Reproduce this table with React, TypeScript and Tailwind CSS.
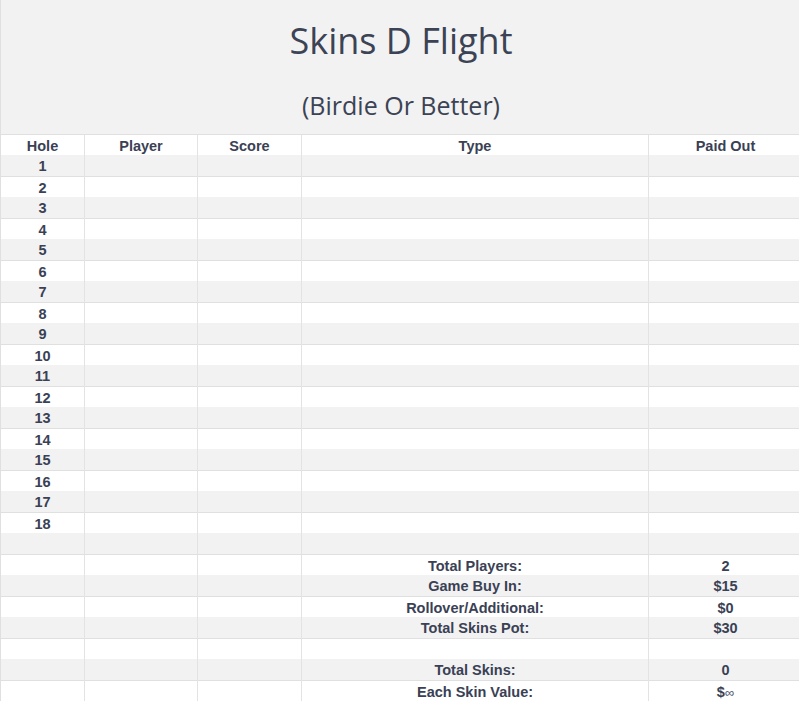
import React from 'react';

type Row = { hole?: string; label?: string; value?: React.ReactNode };

const holes: Row[] = Array.from({ length: 18 }, (_, i) => ({ hole: String(i + 1) }));

const summary: Row[] = [
  {},
  { label: 'Total Players:', value: '2' },
  { label: 'Game Buy In:', value: '$15' },
  { label: 'Rollover/Additional:', value: '$0' },
  { label: 'Total Skins Pot:', value: '$30' },
  {},
  { label: 'Total Skins:', value: '0' },
  {
    label: 'Each Skin Value:',
    value: (
      <>
        $<span className="font-normal text-[13px] text-[#4a5266]">∞</span>
      </>
    ),
  },
];

const cols = 'grid grid-cols-[84px_113px_104px_347px_153px]';
const cell = 'flex items-center justify-center pt-px border-r border-[#e3e3e3]';
const lastCell = 'flex items-center justify-center pt-px';

const TableRow: React.FC<{ row: Row; shaded: boolean }> = ({ row, shaded }) => (
  <div
    className={
      shaded
        ? `${cols} h-[22px] bg-[#f2f2f2] border-b border-[#e0e0e0]`
        : `${cols} h-[20px] bg-white`
    }
  >
    <div className={cell}>{row.hole}</div>
    <div className={cell}></div>
    <div className={cell}></div>
    <div className={cell}>{row.label}</div>
    <div className={lastCell}>{row.value}</div>
  </div>
);

const App: React.FC = () => {
  const rows = [...holes, ...summary];

  return (
    <div className="w-[799px] h-[701px] overflow-hidden bg-white">
      <div className="w-[801px] border-l border-[#e0e0e0]">
        {/* Title block */}
        <div className="h-[135px] bg-[#f2f2f2] border-b border-[#e0e0e0] text-center text-[#3b4354] font-['Open_Sans',sans-serif]">
          <div className="pt-[23px] text-[36px] leading-[36px]">Skins D Flight</div>
          <div className="mt-[34px] text-[25px] leading-[25px]">(Birdie Or Better)</div>
        </div>

        {/* Table */}
        <div className="font-['Liberation_Sans',Arial,sans-serif] font-bold text-[14.5px] text-[#3a4154]">
          <div className={`${cols} h-[20px] bg-white`}>
            <div className={cell}>Hole</div>
            <div className={cell}>Player</div>
            <div className={cell}>Score</div>
            <div className={cell}>Type</div>
            <div className={lastCell}>Paid Out</div>
          </div>
          {rows.map((row, i) => (
            <TableRow key={i} row={row} shaded={i % 2 === 0} />
          ))}
        </div>
      </div>
    </div>
  );
};

export default App;
